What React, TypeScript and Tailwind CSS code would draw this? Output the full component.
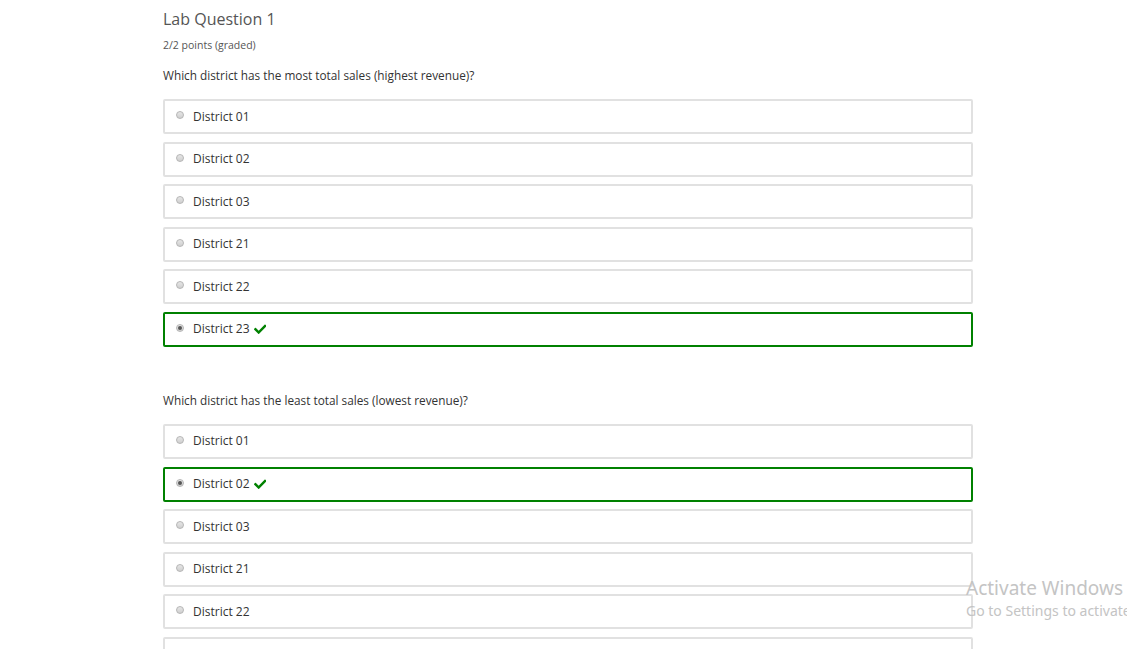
import { FaCheck } from "react-icons/fa";

interface Choice {
  label: string;
  correct?: boolean;
}

const Q1: Choice[] = [
  { label: "District 01" },
  { label: "District 02" },
  { label: "District 03" },
  { label: "District 21" },
  { label: "District 22" },
  { label: "District 23", correct: true },
];

const Q2: Choice[] = [
  { label: "District 01" },
  { label: "District 02", correct: true },
  { label: "District 03" },
  { label: "District 21" },
  { label: "District 22" },
  { label: "District 23" },
];

function Radio({ checked }: { checked?: boolean }) {
  return (
    <span className="flex h-[8px] w-[8px] items-center justify-center rounded-full border border-[#b5b5b5] bg-gradient-to-b from-[#e6e6e6] to-[#cfcfcf]">
      {checked && <span className="h-[4px] w-[4px] rounded-full bg-[#555]" />}
    </span>
  );
}

function ChoiceRow({ choice }: { choice: Choice }) {
  return (
    <div
      className={`flex h-[35px] items-center rounded-[2px] border-2 pl-[11px] ${
        choice.correct ? "border-[#008100]" : "border-[#e1e1e1]"
      }`}
    >
      <div className="-mt-[3px]">
        <Radio checked={choice.correct} />
      </div>
      <span className="ml-[9px] text-[12px] text-[#333]">{choice.label}</span>
      {choice.correct && <FaCheck className="ml-[4px] text-[12.5px] text-[#008100]" />}
    </div>
  );
}

export default function App() {
  return (
    <div className="relative h-[649px] w-[1127px] overflow-hidden bg-white font-['Open_Sans',sans-serif]">
      <div className="ml-[163px] w-[810px] pt-[7px]">
        <h2 className="text-[16px] leading-[24px] text-[#555]">Lab Question 1</h2>
        <div className="mt-[7px] text-[10.5px] leading-[14px] text-[#555]">2/2 points (graded)</div>

        <p className="mt-[15px] text-[11.8px] leading-[16px] text-[#333]">
          Which district has the most total sales (highest revenue)?
        </p>
        <div className="mt-[16px] flex flex-col gap-[7.6px]">
          {Q1.map((c) => (
            <ChoiceRow key={c.label} choice={c} />
          ))}
        </div>

        <p className="mt-[45px] text-[11.8px] leading-[16px] text-[#333]">
          Which district has the least total sales (lowest revenue)?
        </p>
        <div className="mt-[16px] flex flex-col gap-[7.6px]">
          {Q2.map((c) => (
            <ChoiceRow key={c.label} choice={c} />
          ))}
        </div>
      </div>

      {/* Windows activation watermark */}
      <div className="absolute left-[966px] top-[576px] whitespace-nowrap font-['Noto_Sans',sans-serif] text-[#c4c4c4]">
        <div className="text-[19px] leading-[25px]">Activate Windows</div>
        <div className="text-[14px] leading-[20px]">Go to Settings to activate Windows.</div>
      </div>
    </div>
  );
}
